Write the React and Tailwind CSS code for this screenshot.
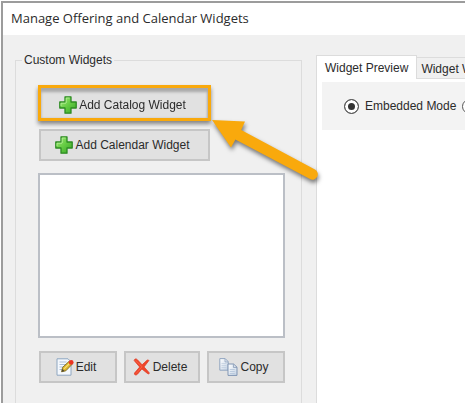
import React from 'react';

const PlusIcon = () => (
    <svg width="18" height="18" viewBox="0 0 18 18" aria-hidden="true">
        <defs>
            <linearGradient id="plusFill" x1="0" y1="0" x2="1" y2="1">
                <stop offset="0" stopColor="#a5ea7c" />
                <stop offset="0.5" stopColor="#66cc44" />
                <stop offset="1" stopColor="#36a526" />
            </linearGradient>
        </defs>
        <path
            d="M6 .8h6V6h5.2v6H12v5.2H6V12H.8V6H6z"
            fill="url(#plusFill)"
            stroke="#2c8a22"
            strokeWidth="1.3"
            strokeLinejoin="round"
        />
        <path d="M7.2 7V2h3.4M2 10V7.2h5" fill="none" stroke="#b9f09a" strokeWidth=".8" />
    </svg>
);

const EditIcon = () => (
    <svg width="18" height="18" viewBox="0 0 18 18" aria-hidden="true">
        <path d="M1 .8h11l3 3v13.4H1z" fill="#f4f8fd" stroke="#8ea6c0" />
        <path d="M3.5 4h7M3.5 6.5h7M3.5 9h5M3.5 11.5h3" stroke="#a9bdd6" />
        <path d="M5.6 13.8l1-4.4 6.2-5.8 3 3-6 6.2z" fill="#ddb52c" stroke="#7d6a20" strokeWidth=".9" />
        <path d="M8 10.8l6-5.8" stroke="#f6e27a" strokeWidth="1.1" />
        <path d="M5.6 13.8l.8-2.8 2.1 2z" fill="#4a4636" />
        <circle cx="15.2" cy="4.4" r="2.4" fill="#ea3323" />
    </svg>
);

const DeleteIcon = () => (
    <svg width="18" height="18" viewBox="0 0 18 18" aria-hidden="true">
        <path
            d="M1.2 2.6C1.4.6 3.2.5 4.2 1.6l4.9 5.2L14 2.3c.9-.8 2.5-.2 1.5.8L11 8.9l5 5.6c.9 1.4-.6 1.8-1.5 1l-5.6-4.6-4.5 5.3c-1.2 1.4-3.6.8-2.9-1.1L6.7 9z"
            fill="#f0452a"
            stroke="#e0402a"
            strokeWidth=".8"
        />
        <path d="M2.5 2.4l6.5 6.3L3 15.6" fill="none" stroke="#fa6a4c" strokeWidth=".8" />
    </svg>
);

const CopyIcon = () => (
    <svg width="19" height="18" viewBox="0 0 19 18" aria-hidden="true">
        <defs>
            <linearGradient id="sheetFill" x1="0" y1="0" x2="1" y2="1">
                <stop offset="0" stopColor="#ffffff" />
                <stop offset="1" stopColor="#c3d2e4" />
            </linearGradient>
        </defs>
        <path d="M.8.6h5.4l3 3v8.6H.8z" fill="url(#sheetFill)" stroke="#92a5bf" />
        <path d="M6 .8v3.1h3" fill="none" stroke="#92a5bf" strokeWidth=".8" />
        <path d="M2.5 5.5h5M2.5 7.5h5M2.5 9.5h5" stroke="#c2cfdf" strokeWidth=".8" />
        <path d="M9 6h5.6l3.4 3.2v8.2H9z" fill="url(#sheetFill)" stroke="#8095b3" />
        <path d="M14.4 6.2v3.2H18" fill="none" stroke="#8095b3" strokeWidth=".8" />
        <path d="M10.8 11.5h5M10.8 13.5h5M10.8 15.5h5" stroke="#b3c4d9" strokeWidth=".8" />
    </svg>
);

const Arrow = () => (
    <svg
        className="pointer-events-none absolute top-8 left-43 z-20 drop-shadow-[1px_3px_2px_rgba(0,0,0,0.5)]"
        width="110"
        height="66"
        viewBox="0 0 110 66"
        aria-hidden="true"
    >
        <path
            d="M2 3l33 1.6-3.8 8.4L105 52.6a5.2 5.2 0 0 1-5 9.4L25.4 22.4 21 30.6z"
            fill="#f9a90c"
        />
    </svg>
);

const ToolButton = ({ icon, label, className = '' }) => (
    <button
        type="button"
        className={`flex items-center justify-center gap-0.5 bg-[#e1e1e1] pr-1 ${className}`}
    >
        {icon}
        <span>{label}</span>
    </button>
);

const ModeRadio = ({ label, defaultChecked = false }) => (
    <label className="flex shrink-0 items-center gap-1.5">
        <input
            type="radio"
            name="mode"
            aria-label={label || 'Mode'}
            defaultChecked={defaultChecked}
            className="size-3.75 shrink-0 appearance-none rounded-full border border-[#555] bg-white checked:bg-[#333] checked:shadow-[inset_0_0_0_3px_#fff]"
        />
        {label}
    </label>
);

const WidgetList = () => (
    <fieldset className="w-[287px] shrink-0 border border-b-0 border-[#dcdcdc] pr-4 pl-[22px]">
        <legend className="-ml-4 px-0.5 leading-4">Custom Widgets</legend>

        <div className="relative mt-[17px] w-[173px]">
            <div className="relative z-10 border-3 border-[#f9a90c] drop-shadow-[0_3px_2px_rgba(0,0,0,0.45)]">
                <ToolButton
                    icon={<PlusIcon />}
                    label="Add Catalog Widget"
                    className="h-[30px] w-full pt-1 shadow-[inset_0_4px_3px_#a8a8a8,inset_-1px_0_2px_#bbb]"
                />
            </div>
            <Arrow />
        </div>

        <ToolButton
            icon={<PlusIcon />}
            label="Add Calendar Widget"
            className="mt-2 ml-px h-8 w-[171px] border-2 border-[#c6c6c6]"
        />

        <div role="listbox" aria-label="Custom Widgets" className="mt-3 h-[165px] border-2 border-[#bbbfc6] bg-white" />

        <div className="mt-[13px] ml-px flex justify-between">
            <ToolButton icon={<EditIcon />} label="Edit" className="h-8 w-[78px] border-2 border-[#c6c6c6]" />
            <ToolButton icon={<DeleteIcon />} label="Delete" className="h-8 w-[76px] border-2 border-[#c6c6c6]" />
            <ToolButton icon={<CopyIcon />} label="Copy" className="h-8 w-[78px] border-2 border-[#c6c6c6]" />
        </div>
    </fieldset>
);

const PreviewTabs = () => (
    <div className="flex min-w-0 flex-1 flex-col overflow-hidden">
        <div role="tablist" className="flex h-6 items-end">
            <button
                type="button"
                role="tab"
                aria-selected="true"
                className="h-6 shrink-0 border border-b-0 border-[#dcdcdc] bg-white px-2 whitespace-nowrap"
            >
                Widget Preview
            </button>
            <button
                type="button"
                role="tab"
                aria-selected="false"
                className="h-[22px] shrink-0 border border-l-0 border-[#dcdcdc] bg-[#f0f0f0] px-1 pt-0.5 whitespace-nowrap"
            >
                Widget W
            </button>
            <div className="h-px flex-1 bg-[#dcdcdc]" />
        </div>
        <div role="tabpanel" className="flex-1 border-l border-[#dcdcdc] bg-white pt-[3px] pl-[5px]">
            <div className="flex h-12 items-center gap-1.5 bg-[#f3f3f3] pl-[22px]">
                <ModeRadio label="Embedded Mode" defaultChecked />
                <ModeRadio />
            </div>
        </div>
    </div>
);

const App = () => (
    <div className="bg-white pt-px pl-px">
        <div className="flex h-[calc(100vh-1px)] flex-col overflow-hidden border-t-2 border-l-2 border-[#9c9c9c] bg-[#f0f0f0] font-['Liberation_Sans',sans-serif] text-xs text-[#2b2b2b]">
            <header className="flex h-8 shrink-0 items-center bg-white pl-2">
                <h1 className="font-['Open_Sans',sans-serif] text-[13px]">Manage Offering and Calendar Widgets</h1>
            </header>
            <main className="flex flex-1 items-stretch gap-3.5 pl-3">
                <div className="flex pt-[17px]">
                    <WidgetList />
                </div>
                <div className="flex min-w-0 flex-1 pt-5">
                    <PreviewTabs />
                </div>
            </main>
        </div>
    </div>
);

export default App;
